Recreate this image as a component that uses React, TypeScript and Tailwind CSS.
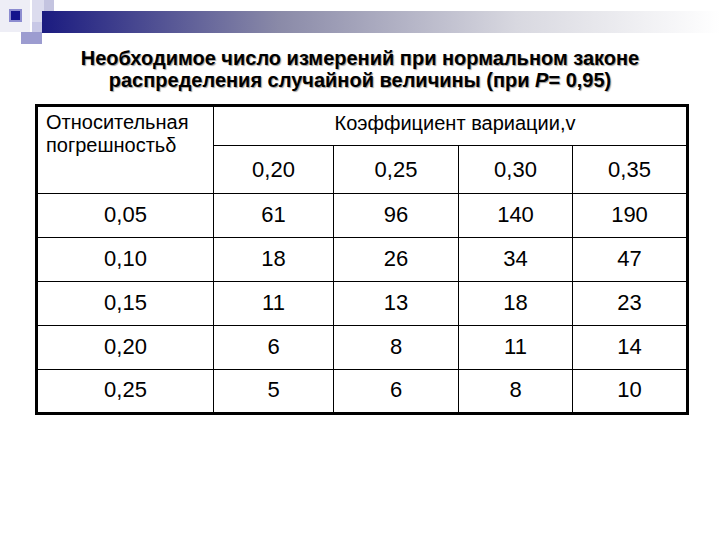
import React from "react";

const rows = [
  ["0,05", "61", "96", "140", "190"],
  ["0,10", "18", "26", "34", "47"],
  ["0,15", "11", "13", "18", "23"],
  ["0,20", "6", "8", "11", "14"],
  ["0,25", "5", "6", "8", "10"],
];

const coeffs = ["0,20", "0,25", "0,30", "0,35"];

function Corner() {
  return (
    <svg width="720" height="46" viewBox="0 0 720 46" className="block">
      <defs>
        <linearGradient id="bar" x1="0" y1="0" x2="1" y2="0">
          <stop offset="0" stopColor="#1b1b80" />
          <stop offset="0.35" stopColor="#8a8aa8" />
          <stop offset="0.7" stopColor="#d8d8e0" />
          <stop offset="1" stopColor="#ffffff" />
        </linearGradient>
      </defs>
      <rect x="0" y="0" width="30" height="32" fill="#eeeef6" />
      <rect x="32" y="0" width="22" height="22" fill="#dcdcee" />
      <rect x="44" y="0" width="10" height="12" fill="#c4c4e0" />
      <rect x="42" y="11" width="678" height="22" fill="url(#bar)" />
      <rect x="9" y="9" width="13" height="13" fill="#8c8cd0" />
      <rect x="11" y="11" width="9" height="9" fill="#14148c" />
      <rect x="21" y="32" width="21" height="12" fill="#9c9cd0" />
      <rect x="32" y="22" width="10" height="10" fill="#c8c8e6" />
    </svg>
  );
}

export default function App() {
  return (
    <div
      className="w-[720px] h-[540px] bg-white text-black overflow-hidden"
      style={{ fontFamily: '"Liberation Sans", Arial, sans-serif' }}
    >
      <Corner />

      {/* Title */}
      <h1 className="text-center font-bold text-[20px] leading-[22px] mt-[1px] [text-shadow:1px_1px_1px_#a0a0a0]">
        Необходимое число измерений при нормальном законе
        <br />
        распределения случайной величины (при <i>P</i>= 0,95)
      </h1>

      {/* Table */}
      <table className="ml-[35px] mt-[13px] w-[651px] table-fixed border-collapse border-[3px] border-black">
        <colgroup>
          <col className="w-[177px]" />
          <col className="w-[120px]" />
          <col className="w-[125px]" />
          <col className="w-[114px]" />
          <col className="w-[115px]" />
        </colgroup>
        <thead>
          <tr className="h-[40px]">
            <th
              rowSpan={2}
              className="border border-black align-top text-left font-normal text-[20px] leading-[23px] pl-[8px] pt-[4px]"
            >
              Относительная
              <br />
              погрешностьδ
            </th>
            <th
              colSpan={4}
              className="border border-black align-top font-normal text-[20px] leading-[23px] pl-[10px] pt-[5px]"
            >
              Коэффициент вариации,v
            </th>
          </tr>
          <tr className="h-[48px]">
            {coeffs.map((c) => (
              <th key={c} className="border border-black font-normal text-[22px]">
                {c}
              </th>
            ))}
          </tr>
        </thead>
        <tbody>
          {rows.map((r) => (
            <tr key={r[0]} className="h-[44px]">
              {r.map((v, i) => (
                <td key={i} className="border border-black text-center text-[22px] pb-[3px]">
                  {v}
                </td>
              ))}
            </tr>
          ))}
        </tbody>
      </table>
    </div>
  );
}
